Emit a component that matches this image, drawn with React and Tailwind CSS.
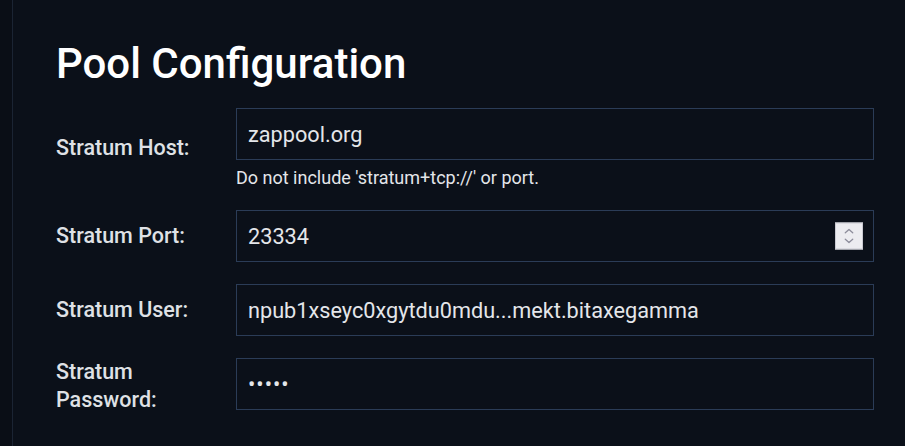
import React from "react";

const font = { fontFamily: "Roboto, 'Noto Sans', sans-serif" };

function Field({ value, type = "text", spinner = false }) {
  return (
    <div className="relative h-[52px] border border-[#2b3c57] bg-[#0b1019]">
      <input
        readOnly
        type={type}
        value={value}
        className={
          "h-full w-full bg-transparent pl-[11px] pr-3 text-[21.7px] text-[#e4e6ea] outline-none" +
          (type === "password" ? " tracking-[1px]" : "")
        }
        style={font}
      />
      {spinner && (
        <div className="absolute right-[10px] top-1/2 flex h-[27px] w-[28px] -translate-y-1/2 items-center justify-center border border-[#c9c9d1] bg-[#ececf0]">
          <svg width="28" height="27" viewBox="0 0 28 27" fill="none">
            <polyline points="10,10 14,6.5 18,10" stroke="#8d8d9b" strokeWidth="1.4" strokeLinecap="round" strokeLinejoin="round" />
            <polyline points="10,17 14,20.5 18,17" stroke="#8d8d9b" strokeWidth="1.4" strokeLinecap="round" strokeLinejoin="round" />
          </svg>
        </div>
      )}
    </div>
  );
}

function Label({ children }) {
  return (
    <label className="self-center text-[21.5px] font-medium leading-[28px] text-[#dfe1e5]" style={font}>
      {children}
    </label>
  );
}

export default function App() {
  return (
    <div className="flex h-[446px] w-[905px] overflow-hidden bg-[#0b1019]" style={font}>
      <div className="w-[13px] shrink-0 border-r border-[#1b2433] bg-[#0a0e16]" />
      <div className="flex-1 pl-[43px] pr-[31px] pt-[39px]">
        <h1 className="text-[42px] font-medium leading-[49px] text-white" style={font}>
          Pool Configuration
        </h1>
        <div className="mt-[20px] grid grid-cols-[150px_1fr] gap-x-[30px] gap-y-[22px]">
          <Label>Stratum Host:</Label>
          <div>
            <Field value="zappool.org" />
            <p className="mt-[7px] text-[18px] leading-[21px] text-[#e4e6ea]">
              Do not include 'stratum+tcp://' or port.
            </p>
          </div>
          <Label>Stratum Port:</Label>
          <Field value="23334" spinner />
          <Label>Stratum User:</Label>
          <Field value="npub1xseyc0xgytdu0mdu...mekt.bitaxegamma" />
          <Label>Stratum Password:</Label>
          <Field value="12345" type="password" />
        </div>
      </div>
    </div>
  );
}
